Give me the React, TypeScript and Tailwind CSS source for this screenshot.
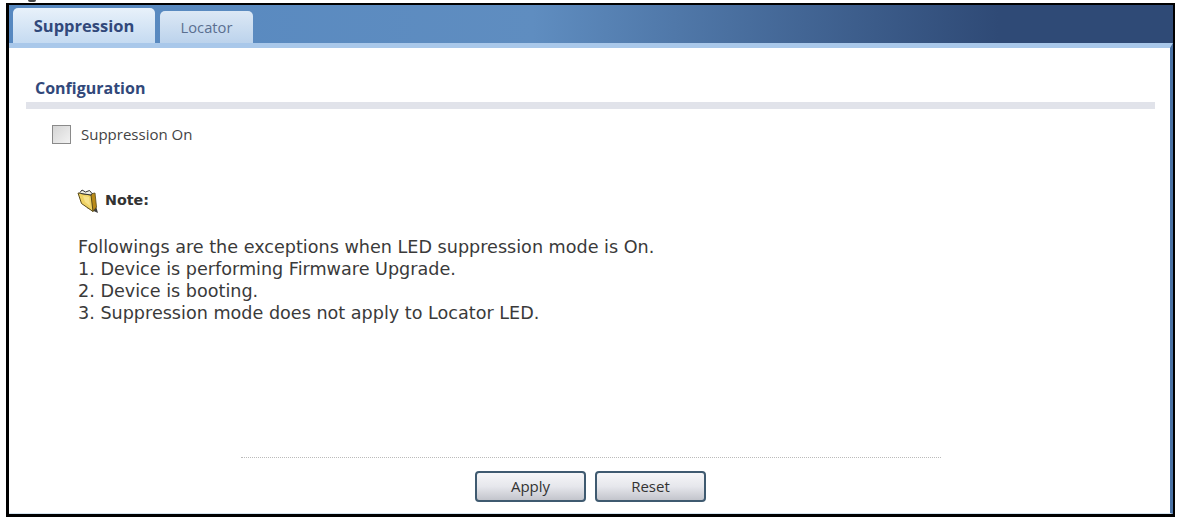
import React from "react";

const body = { fontFamily: '"Open Sans", "Noto Sans", sans-serif' };
const dejavu = { fontFamily: '"DejaVu Sans", sans-serif' };

const NoteIcon = () => (
  <svg width="22" height="24" viewBox="0 0 22 24">
    <path d="M10 19 L21 24 L19 17 Z" fill="#3d3d3d" />
    <path d="M13 5 L18 4 L19.5 18 L16 22.5 Z" fill="#b98a18" stroke="#5c4d18" strokeWidth="0.8" />
    <path d="M1 4 L14 6 L16 22.5 L4.5 14.5 Z" fill="#efd264" stroke="#5c4d18" strokeWidth="1" />
    <path d="M6 7 L12 8 L13 17 L8 13 Z" fill="#f7e28a" />
    <path d="M3 3.5 L5 1 L8.5 3 L12.5 1.5 L15 4.5 L14 6 L4 4.5 Z" fill="#efefe6" stroke="#333" strokeWidth="1" />
  </svg>
);

const PageButton = ({ label }: { label: string }) => (
  <button
    type="button"
    className="h-[31px] w-[111px] rounded-[4px] border-2 border-[#3f5a70] bg-gradient-to-b from-[#f6f6f8] via-[#e6e7ec] to-[#c3c5cc] text-[15px] text-[#333]"
  >
    {label}
  </button>
);

export default function App() {
  return (
    <div className="flex h-[517px] w-[1181px] flex-col overflow-hidden bg-white px-[6px]" style={body}>
      <div className="h-[3px] shrink-0 pl-[22px]">
        <div className="h-[2px] w-[8px] rounded-b-[3px] bg-[#444]" />
      </div>
      <div className="flex min-h-0 flex-1 flex-col border-t-2 border-r-2 border-b-[3px] border-l-[3px] border-black bg-white">
        <div className="flex h-[38px] shrink-0 items-end bg-gradient-to-r from-[#5688c0] from-0% via-[#5f8dc0] via-45% to-[#2f4a76] to-85% pl-[4px]">
          <div className="-mb-[1px] flex h-[36px] w-[142px] items-center justify-center rounded-t-[5px] bg-gradient-to-b from-[#e8f1fa] to-[#c4daf1] text-[16.5px] font-bold text-[#31487a]">
            Suppression
          </div>
          <div className="ml-[5px] flex h-[32px] w-[93px] items-center justify-center rounded-t-[5px] bg-gradient-to-b from-[#dce8f5] to-[#bcd3ec] text-[14.7px] text-[#5a6f90]">
            Locator
          </div>
        </div>
        <div className="flex min-h-0 flex-1 flex-col border-t-[5px] border-r-[3px] border-b border-t-[#a9c8ea] border-r-[#4a72a5] border-b-[#d4e4f0]">
          <div className="pt-[30px] pr-[15px] pl-[17px]">
            <h2 className="pl-[9px] text-[16px] leading-[20px] font-bold text-[#31487a]">Configuration</h2>
            <div className="mt-[4px] h-[7px] bg-[#e1e3ea]" />
          </div>
          <div className="mt-[16px] flex items-center pl-[43px]">
            <span className="h-[19px] w-[19px] border border-[#8a8a8a] bg-gradient-to-br from-[#d5d5d5] to-[#f2f2f2]" />
            <span className="ml-[10px] text-[15px] leading-[19px] text-[#444]">Suppression On</span>
          </div>
          <div className="mt-[45px] flex items-center gap-[6px] pl-[68px]">
            <NoteIcon />
            <span className="text-[14.3px] font-bold text-[#333]" style={dejavu}>
              Note:
            </span>
          </div>
          <div className="mt-[23px] pl-[69px] text-[17.6px] leading-[22px] text-[#3a3a3a]" style={dejavu}>
            <p>Followings are the exceptions when LED suppression mode is On.</p>
            <p>1. Device is performing Firmware Upgrade.</p>
            <p>2. Device is booting.</p>
            <p>3. Suppression mode does not apply to Locator LED.</p>
          </div>
          <div className="mt-auto flex flex-col items-center pb-[11px] pl-[2px]">
            <div className="w-[700px] border-t border-dotted border-[#bbb]" />
            <div className="mt-[13px] flex gap-[9px]">
              <PageButton label="Apply" />
              <PageButton label="Reset" />
            </div>
          </div>
        </div>
      </div>
    </div>
  );
}
